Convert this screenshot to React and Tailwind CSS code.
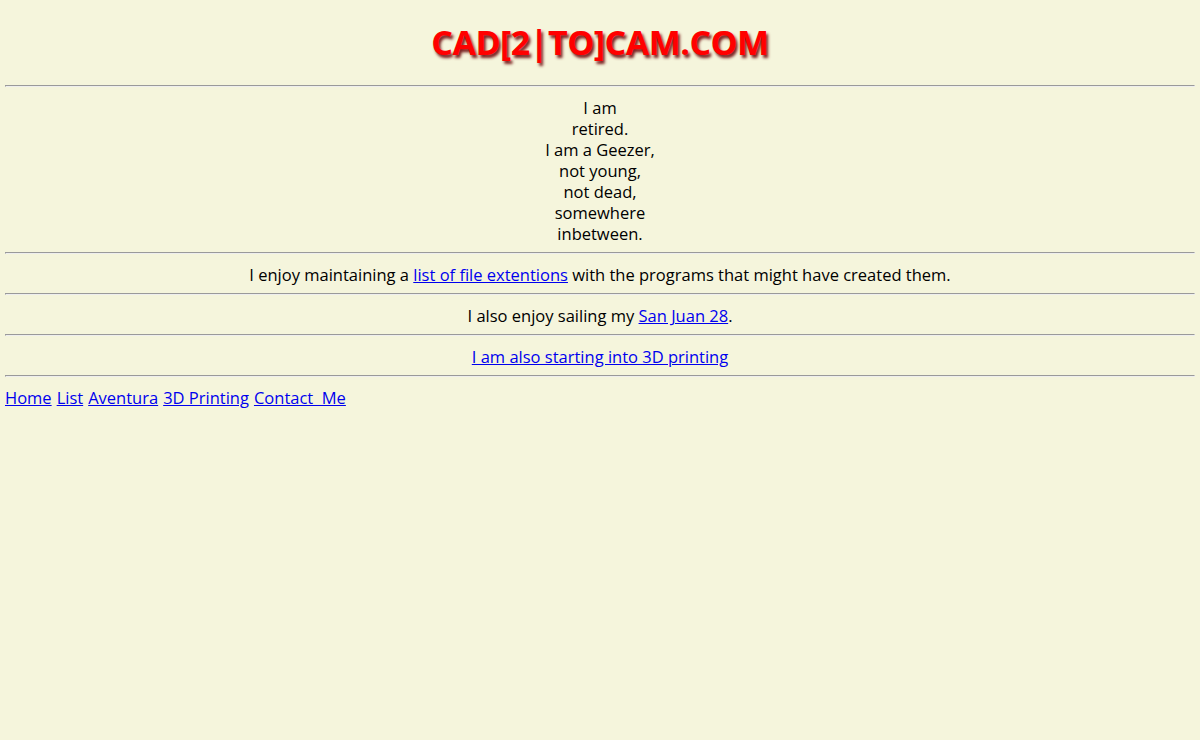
export default function App() {
  const hr = "mt-[8px] mb-[10px] h-[2px] border-t border-l border-t-[#9a9a9a] border-l-[#9a9a9a] border-b border-r border-b-[#eeeeee] border-r-[#eeeeee]";
  const link = "text-[#0000ee] underline";

  return (
    <div className="min-h-screen bg-[#f5f5dc] px-[5px] text-black text-[16.5px] leading-[21px] font-['Open_Sans',sans-serif]">
      <div className="h-[77px] flex items-center justify-center pt-[8px]">
        <h1 className="text-[34px] font-bold text-[#ff0000] tracking-[-0.5px] [text-shadow:2px_3px_3px_#7a2020]">
          CAD[2|TO]CAM.COM
        </h1>
      </div>
      <hr className={hr} />
      <div className="text-center">
        <div>I am</div>
        <div>retired.</div>
        <div>I am a Geezer,</div>
        <div>not young,</div>
        <div>not dead,</div>
        <div>somewhere</div>
        <div>inbetween.</div>
      </div>
      <hr className={hr} />
      <div className="text-center">
        I enjoy maintaining a <a href="#" className={link}>list of file extentions</a> with the programs that might have created them.
      </div>
      <hr className={hr} />
      <div className="text-center">
        I also enjoy sailing my <a href="#" className={link}>San Juan 28</a>.
      </div>
      <hr className={hr} />
      <div className="text-center">
        <a href="#" className={link}>I am also starting into 3D printing</a>
      </div>
      <hr className={hr} />
      <div className="flex gap-[5px]">
        <a href="#" className={link}>Home</a>
        <a href="#" className={link}>List</a>
        <a href="#" className={link}>Aventura</a>
        <a href="#" className={link}>3D Printing</a>
        <a href="#" className={link}>Contact&nbsp;&nbsp;Me</a>
      </div>
    </div>
  );
}
